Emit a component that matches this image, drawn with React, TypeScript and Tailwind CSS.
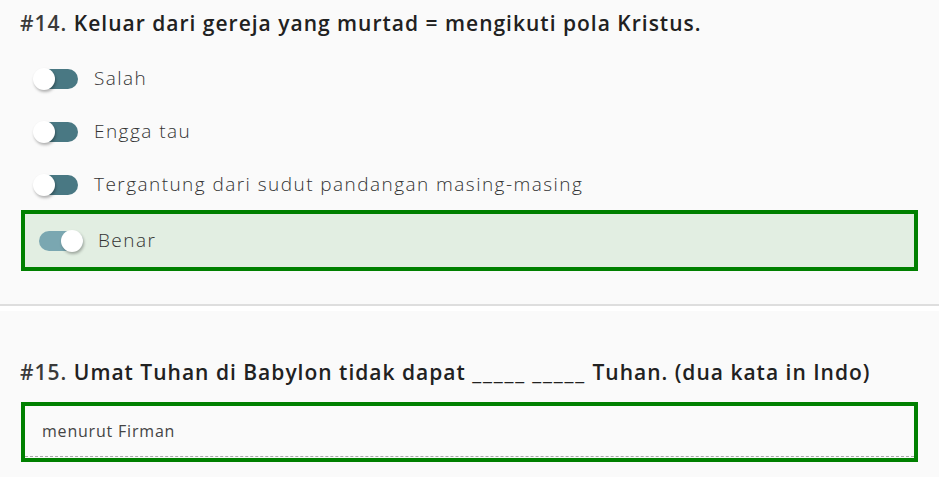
import React from "react";

const font = { fontFamily: '"Open Sans", "Liberation Sans", sans-serif' };

function Toggle({ on }: { on?: boolean }) {
  return (
    <div className="relative w-[46px] h-[22px] flex items-center shrink-0">
      <div
        className={
          "w-[44px] h-[20px] rounded-full ml-[1px] " +
          (on ? "bg-[#7aa7b1]" : "bg-[#497883]")
        }
      />
      <div
        className={
          "absolute top-0 w-[22px] h-[22px] rounded-full bg-white shadow-[1px_2px_3px_rgba(0,0,0,0.3)] " +
          (on ? "left-[23px]" : "left-0")
        }
      />
    </div>
  );
}

function Option({ label }: { label: string }) {
  return (
    <div className="flex items-center h-[53px] pl-[12px]">
      <Toggle />
      <span className="ml-[15px] text-[19px] font-light tracking-[1.45px] text-[#333]">{label}</span>
    </div>
  );
}

export default function App() {
  return (
    <div className="w-[939px] h-[477px] bg-white overflow-hidden" style={font}>
      <div className="bg-[#fafafa] border-b-2 border-[#dedede] px-[21px] pt-[7px] h-[306px]">
        <div className="text-[21px] font-semibold tracking-[1px] text-[#212121] leading-[32px] -ml-px whitespace-nowrap">
          <span className="text-[#3a3a3a]">#14.</span> Keluar dari gereja yang murtad = mengikuti pola Kristus.
        </div>
        <div className="mt-[13px]">
          <Option label="Salah" />
          <Option label="Engga tau" />
          <Option label="Tergantung dari sudut pandangan masing-masing" />
        </div>
        <div className="mt-[-1px] h-[61px] border-[4px] border-[#008000] bg-[#e2eee2] flex items-center pl-[13px]">
          <Toggle on />
          <span className="ml-[14px] text-[19px] font-light tracking-[1.45px] text-[#333]">Benar</span>
        </div>
      </div>
      <div className="mt-[5px] bg-[#fafafa] h-[200px] px-[21px] pt-[45px]">
        <div className="text-[21px] font-semibold tracking-[1px] text-[#212121] leading-[32px] -ml-px whitespace-nowrap">
          <span className="text-[#3a3a3a]">#15.</span> Umat Tuhan di Babylon tidak dapat{" "}
          <span className="tracking-[1.8px]">_____</span> <span className="tracking-[1.8px]">_____</span> Tuhan. (dua kata in Indo)
        </div>
        <div className="mt-[14px] h-[60px] border-[4px] border-[#008000] bg-[#fafafa] flex flex-col">
          <div className="flex-1 flex items-center pl-[17px] text-[16px] tracking-[0.8px] text-[#444]">menurut Firman</div>
          <div className="border-b border-dashed border-[#aaa] mb-[1px]" />
        </div>
      </div>
    </div>
  );
}
